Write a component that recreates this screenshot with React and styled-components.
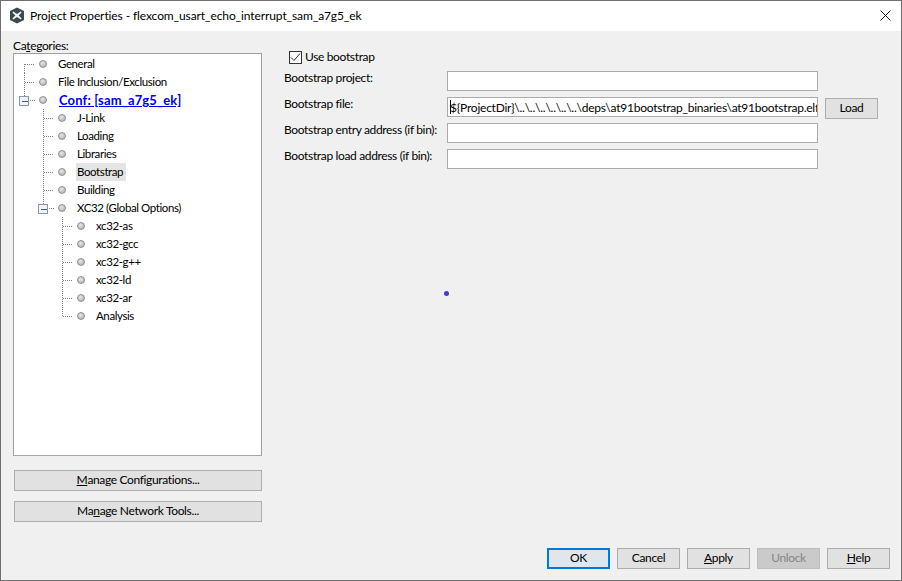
import React from "react";
import styled, { createGlobalStyle } from "styled-components";

const GlobalStyle = createGlobalStyle`
  html, body {
    margin: 0;
    padding: 0;
    background: #f0f0f0;
  }
`;

const TREE = [
  { label: "General", level: 0, first: true },
  { label: "File Inclusion/Exclusion", level: 0 },
  { label: "Conf: [sam_a7g5_ek]", level: 0, expander: true, link: true },
  { label: "J-Link", level: 1 },
  { label: "Loading", level: 1 },
  { label: "Libraries", level: 1 },
  { label: "Bootstrap", level: 1, selected: true },
  { label: "Building", level: 1 },
  { label: "XC32 (Global Options)", level: 1, expander: true },
  { label: "xc32-as", level: 2 },
  { label: "xc32-gcc", level: 2 },
  { label: "xc32-g++", level: 2 },
  { label: "xc32-ld", level: 2 },
  { label: "xc32-ar", level: 2 },
  { label: "Analysis", level: 2, last: true },
];

const FIELDS = [
  { label: "Bootstrap project:", value: "" },
  {
    label: "Bootstrap file:",
    value: "${ProjectDir}\\..\\..\\..\\..\\..\\..\\deps\\at91bootstrap_binaries\\at91bootstrap.elf",
    load: true,
  },
  { label: "Bootstrap entry address (if bin):", value: "" },
  { label: "Bootstrap load address (if bin):", value: "" },
];

function TreeGuide({ level, first, last, expander }) {
  const x = 10.5 + level * 19;
  const width = x + 14.5;
  const dots = { stroke: "#808080", strokeWidth: 1, strokeDasharray: "1 1", shapeRendering: "crispEdges" };
  return (
    <svg width={width} height="18" viewBox={`0 0 ${width} 18`} style={{ flex: "none" }}>
      <line x1={x} x2={x} y1={first ? 9 : 0} y2={expander ? 5 : last ? 9 : 18} {...dots} />
      <line x1={expander ? x + 5 : x} x2={x + 10} y1="9.5" y2="9.5" {...dots} />
      {expander && (
        <g shapeRendering="crispEdges">
          <rect x={x - 5} y="5.5" width="9" height="9" fill="#f2f4f7" stroke="#8c97a8" />
          <line x1={x - 3} x2={x + 3} y1="10.5" y2="10.5" stroke="#3a5a9a" />
        </g>
      )}
    </svg>
  );
}

function App() {
  return (
    <Window>
      <GlobalStyle />
      <TitleBar>
        <svg width="16" height="17" viewBox="0 0 16 17">
          <path d="M8 0.5 L15 4 V13 L8 16.5 L1 13 V4 Z" fill="#3c4b52" />
          <path d="M4.2 4.5 L8 7 L11.8 4.5 L12.6 5.6 L9.6 8.5 L12.6 11.4 L11.8 12.5 L8 10 L4.2 12.5 L3.4 11.4 L6.4 8.5 L3.4 5.6 Z" fill="#f4f6f6" />
        </svg>
        <TitleText>Project Properties - flexcom_usart_echo_interrupt_sam_a7g5_ek</TitleText>
        <CloseIcon width="11" height="11" viewBox="0 0 11 11">
          <path d="M0.5 0.5 L10.5 10.5 M10.5 0.5 L0.5 10.5" stroke="#1a1a1a" fill="none" />
        </CloseIcon>
      </TitleBar>
      <Content>
        <Sidebar>
          <CategoriesLabel>
            Ca<u>t</u>egories:
          </CategoriesLabel>
          <Tree>
            {TREE.map((item) => (
              <TreeRow key={item.label}>
                <TreeGuide {...item} />
                <Bullet />
                <TreeLabel $selected={item.selected} $link={item.link}>
                  {item.label}
                </TreeLabel>
              </TreeRow>
            ))}
          </Tree>
          <SideButton>
            <u>M</u>anage Configurations...
          </SideButton>
          <SideButton>
            Ma<u>n</u>age Network Tools...
          </SideButton>
        </Sidebar>
        <Main>
          <CheckRow>
            <CheckBox>
              <svg width="11" height="11" viewBox="0 0 11 11">
                <path d="M1 5.5 L4 8.5 L10 1.5" stroke="#333" fill="none" />
              </svg>
            </CheckBox>
            <CheckLabel>Use bootstrap</CheckLabel>
          </CheckRow>
          <FormGrid>
            {FIELDS.map((field) => (
              <React.Fragment key={field.label}>
                <FieldLabel>{field.label}</FieldLabel>
                <Field>
                  {field.value && <Caret />}
                  {field.value && <FieldText>{field.value}</FieldText>}
                </Field>
                {field.load ? <LoadButton>Load</LoadButton> : <span />}
              </React.Fragment>
            ))}
          </FormGrid>
          <BusyDot />
        </Main>
      </Content>
      <Footer>
        <DialogButton $variant="default">OK</DialogButton>
        <DialogButton>Cancel</DialogButton>
        <DialogButton>
          <u>A</u>pply
        </DialogButton>
        <DialogButton $variant="disabled">Unlock</DialogButton>
        <DialogButton>
          <u>H</u>elp
        </DialogButton>
      </Footer>
    </Window>
  );
}

const Window = styled.div`
  position: relative;
  box-sizing: border-box;
  width: 902px;
  height: 581px;
  display: flex;
  flex-direction: column;
  overflow: hidden;
  background: #f0f0f0;
  border: 1px solid #6f6f6f;
  font-family: "Lato", "Noto Sans", sans-serif;
  font-size: 12px;
  letter-spacing: -0.35px;
  color: #000;
`;

const TitleBar = styled.div`
  flex: none;
  box-sizing: border-box;
  height: 30px;
  display: flex;
  align-items: center;
  padding: 0 10px 2px 8px;
  background: #fff;
`;

const TitleText = styled.span`
  margin-left: 5px;
  font-size: 12px;
  letter-spacing: -0.1px;
  color: #000;
`;

const CloseIcon = styled.svg`
  margin-left: auto;
  margin-right: 0;
`;

const Content = styled.div`
  flex: 1;
  min-height: 0;
  display: flex;
`;

const Sidebar = styled.div`
  flex: none;
  width: 249px;
  margin-left: 12px;
  padding-bottom: 26px;
  display: flex;
  flex-direction: column;
`;

const CategoriesLabel = styled.div`
  height: 22px;
  line-height: 30px;
`;

const Tree = styled.div`
  flex: 1;
  box-sizing: border-box;
  margin-bottom: 14px;
  padding-top: 1px;
  background: #fff;
  border: 1px solid #a0a0a0;
  border-bottom-color: #a8a8a8;
`;

const TreeRow = styled.div`
  height: 18px;
  display: flex;
  align-items: center;
`;

const Bullet = styled.span`
  flex: none;
  box-sizing: border-box;
  width: 8px;
  height: 8px;
  margin: -1px 0 0 0;
  border-radius: 50%;
  border: 1px solid #8f8f8f;
  background: radial-gradient(circle at 40% 35%, #e8e8e8, #a8a8a8);
`;

const TreeLabel = styled.span`
  margin-left: ${(p) => (p.$link ? "11px" : "10px")};
  padding: 0 ${(p) => (p.$selected ? "3px" : "0")} 0 1px;
  line-height: 18px;
  white-space: nowrap;
  background: ${(p) => (p.$selected ? "#e4e4e4" : "transparent")};
  color: ${(p) => (p.$link ? "#0000e6" : "#000")};
  font-weight: ${(p) => (p.$link ? 700 : 400)};
  font-size: ${(p) => (p.$link ? "13px" : "11.5px")};
  letter-spacing: ${(p) => (p.$link ? "0.15px" : "-0.4px")};
  text-decoration: ${(p) => (p.$link ? "underline" : "none")};
`;

const ButtonBase = styled.div`
  box-sizing: border-box;
  display: flex;
  align-items: center;
  justify-content: center;
  height: 21px;
  padding-bottom: 2px;
  background: #e1e1e1;
  border: 1px solid #adadad;
  color: #000;
`;

const SideButton = styled(ButtonBase)`
  margin-left: 1px;
  white-space: pre;
  & + & {
    margin-top: 10px;
  }
`;

const Main = styled.div`
  position: relative;
  flex: 1;
  padding: 20px 0 0 22px;
`;

const CheckRow = styled.label`
  display: flex;
  align-items: center;
  gap: 3px;
  height: 13px;
  margin-left: 5px;
`;

const CheckLabel = styled.span`
  margin-top: -2px;
`;

const CheckBox = styled.span`
  flex: none;
  box-sizing: border-box;
  width: 13px;
  height: 13px;
  display: flex;
  align-items: center;
  justify-content: center;
  background: #fff;
  border: 1px solid #333;
`;

const FormGrid = styled.div`
  margin-top: 7px;
  display: grid;
  grid-template-columns: 163px 371px 53px;
  grid-auto-rows: 20px;
  row-gap: 6px;
  column-gap: 0;
`;

const FieldLabel = styled.div`
  line-height: 14px;
  white-space: nowrap;
`;

const Field = styled.div`
  position: relative;
  box-sizing: border-box;
  height: 20px;
  display: flex;
  align-items: center;
  overflow: hidden;
  background: #fff;
  border: 1px solid #ababab;
`;

const Caret = styled.span`
  position: absolute;
  left: 2px;
  top: 2px;
  width: 1px;
  height: 14px;
  background: #000;
`;

const FieldText = styled.span`
  margin-left: 2px;
  white-space: nowrap;
  letter-spacing: -0.24px;
`;

const LoadButton = styled(ButtonBase)`
  margin: 1px 0 -2px 7px;
  width: 53px;
`;

const BusyDot = styled.span`
  position: absolute;
  left: 182px;
  top: 260px;
  width: 5px;
  height: 5px;
  border-radius: 50%;
  background: #3c3fd0;
`;

const Footer = styled.div`
  flex: none;
  display: flex;
  justify-content: flex-end;
  gap: 7px;
  padding: 0 11px 11px 0;
`;

const DialogButton = styled(ButtonBase)`
  width: 63px;
  ${(p) =>
    p.$variant === "default" &&
    `
    background: #e1e6ec;
    border: 2px solid #0078d7;
  `}
  ${(p) =>
    p.$variant === "disabled" &&
    `
    background: #cacaca;
    border-color: #bdbdbd;
    color: #868686;
  `}
`;

export default App;
